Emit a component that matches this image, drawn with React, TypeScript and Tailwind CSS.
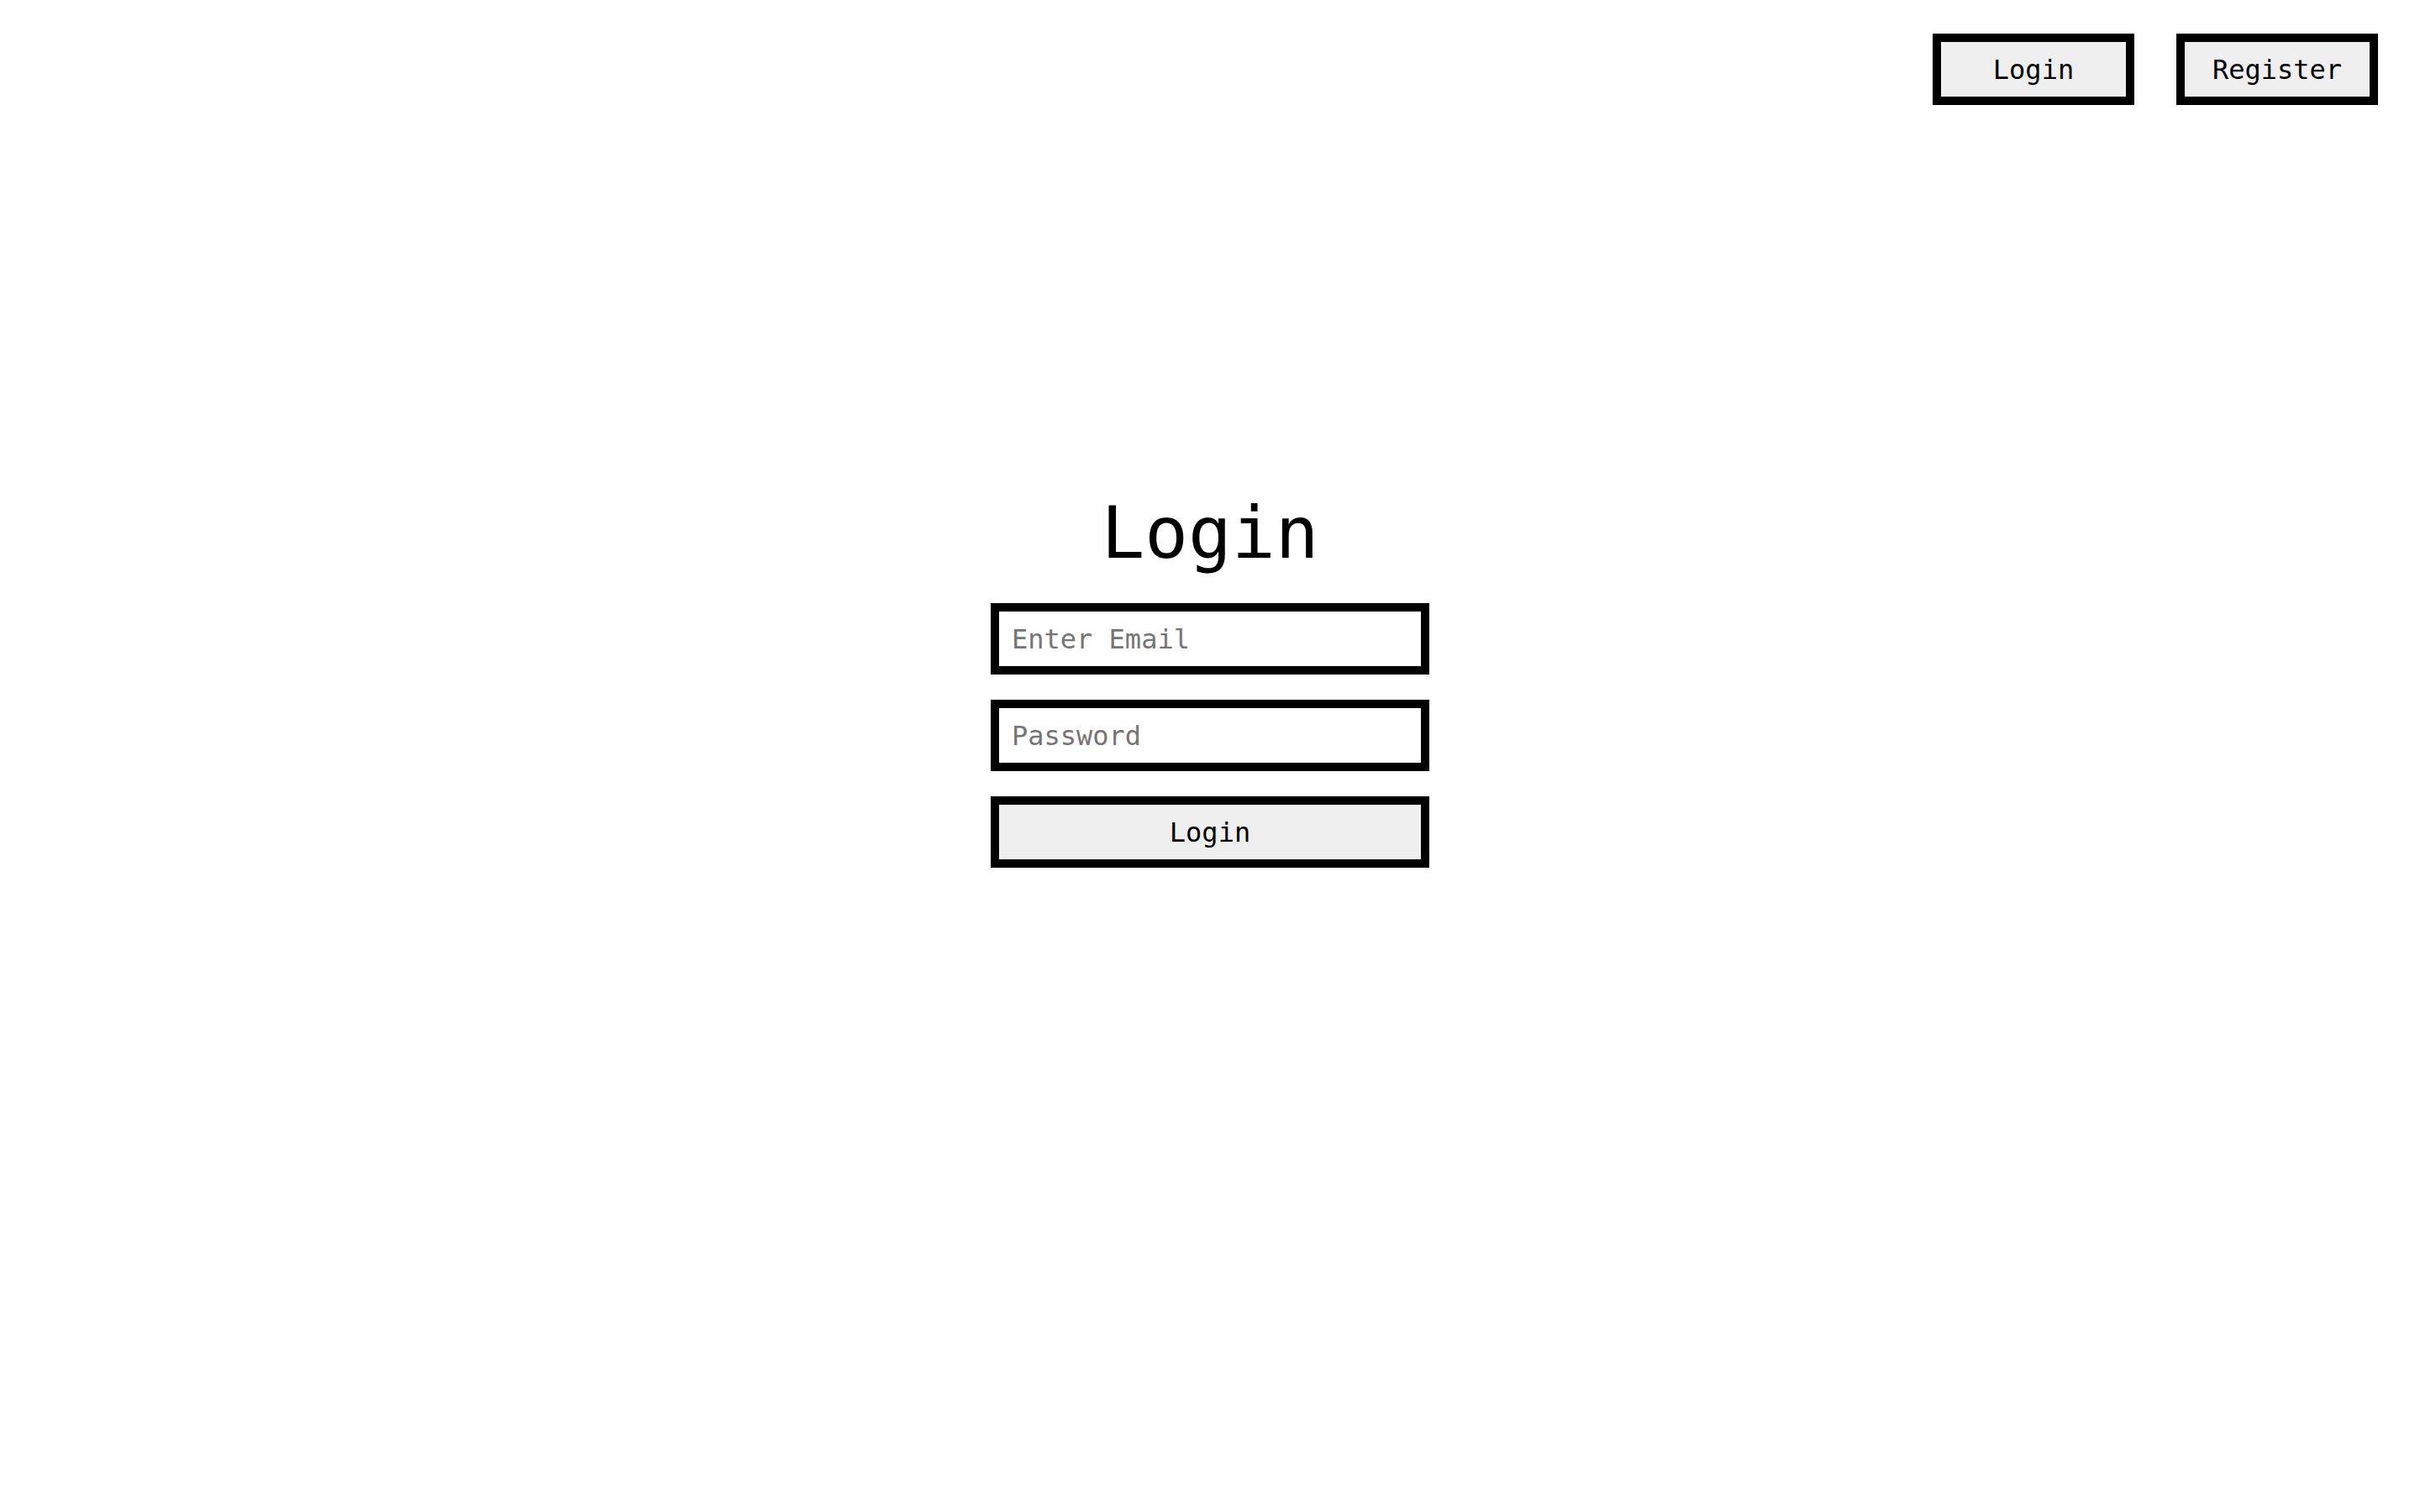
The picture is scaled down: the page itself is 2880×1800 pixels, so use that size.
import React, { useState } from "react";

const font = "font-['DejaVu_Sans_Mono','Liberation_Mono',monospace]";

const NavButton = ({ label }: { label: string }) => (
  <button
    className={`${font} w-[240px] h-[85px] border-[10px] border-black bg-[#efefef] text-[32px] leading-none text-black flex items-center justify-center`}
  >
    {label}
  </button>
);

export default function App() {
  const [email, setEmail] = useState("");
  const [password, setPassword] = useState("");

  return (
    <div className={`${font} min-h-screen w-full bg-white`}>
      <header className="flex justify-end gap-[50px] pt-[40px] pr-[50px]">
        <NavButton label="Login" />
        <NavButton label="Register" />
      </header>

      <main className="flex flex-col items-center pt-[466px]">
        <h1 className="text-[86px] leading-none text-black h-[86px]">Login</h1>
        <form
          className="mt-[41px] w-[522px] flex flex-col gap-[30px]"
          onSubmit={(e) => e.preventDefault()}
        >
          <input
            type="email"
            value={email}
            onChange={(e) => setEmail(e.target.value)}
            placeholder="Enter Email"
            className={`${font} h-[85px] w-full border-[10px] border-black bg-white px-[15px] text-[32px] text-black placeholder:text-[#757575] outline-none`}
          />
          <input
            type="password"
            value={password}
            onChange={(e) => setPassword(e.target.value)}
            placeholder="Password"
            className={`${font} h-[85px] w-full border-[10px] border-black bg-white px-[15px] text-[32px] text-black placeholder:text-[#757575] outline-none`}
          />
          <button
            type="submit"
            className={`${font} h-[85px] w-full border-[10px] border-black bg-[#efefef] text-[32px] leading-none text-black flex items-center justify-center`}
          >
            Login
          </button>
        </form>
      </main>
    </div>
  );
}
